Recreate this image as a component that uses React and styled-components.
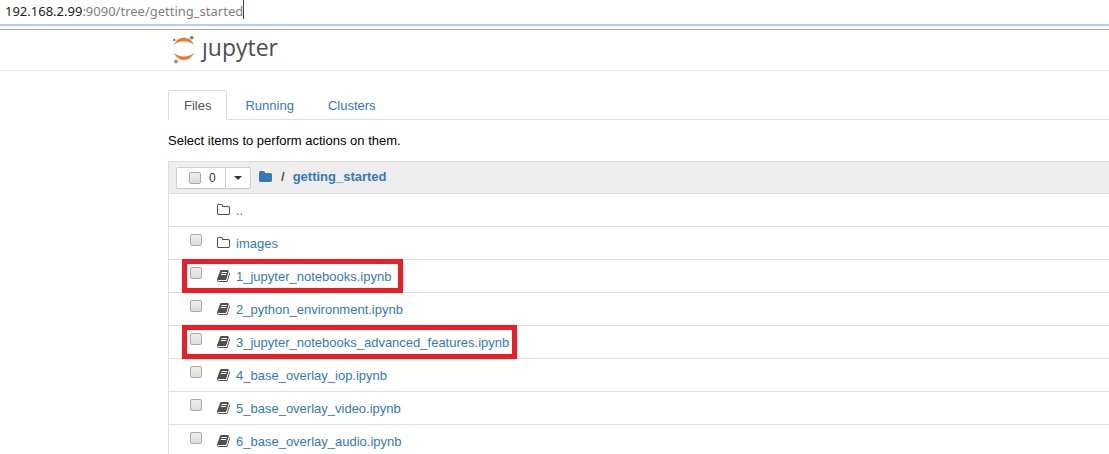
import React from "react";
import styled, { createGlobalStyle, css } from "styled-components";

const GlobalStyle = createGlobalStyle`
  *, *::before, *::after { box-sizing: border-box; }
  body {
    margin: 0;
    background: #fff;
    color: #000;
    font: 13px/20px "Liberation Sans", Arial, sans-serif;
    overflow: hidden;
  }
`;

const AddressBar = styled.label`
  display: flex;
  height: 26px;
  padding-left: 5px;
  border-bottom: 2px solid #b2cdfb;
  font: 13px/22px "Noto Sans", "Open Sans", sans-serif;
  color: #222;
`;

const AddressInput = styled.input`
  field-sizing: content;
  height: 22px;
  padding: 0;
  border: 0;
  outline: 0;
  background: none;
  font: inherit;
  color: #808080;
`;

const Caret = styled.span`
  width: 1px;
  height: 19px;
  background: #444;
`;

const Header = styled.header`
  display: flex;
  align-items: flex-start;
  height: 42px;
  margin-top: 3px;
  padding-left: 172px;
  border-top: 1px solid #ababab;
  border-bottom: 1px solid #e7e7e7;
`;

const Logo = styled.a`
  display: flex;
  gap: 6px;
  padding-top: 5px;
  color: #4e4e4e;
  text-decoration: none;
`;

const Wordmark = styled.span`
  font: 23px/24px "Open Sans", "Noto Sans", sans-serif;
`;

const Main = styled.main`
  padding: 19px 0 0 168px;
`;

const Tabs = styled.nav`
  display: flex;
  gap: 2px;
  height: 30px;
  border-bottom: 1px solid #ddd;
`;

const Tab = styled.a`
  height: 30px;
  padding: 5px 15px;
  border: 1px solid transparent;
  border-radius: 2px 2px 0 0;
  color: #337ab7;
  text-decoration: none;
  ${(p) => p.$active && css`
    color: #555;
    background: #fff;
    border-color: #ddd #ddd #fff;
  `}
`;

const Hint = styled.p`
  margin: 11px 0 10px;
`;

const Listing = styled.section`
  border: 1px solid #ddd;
  border-width: 1px 0 0 1px;
`;

const ListHeader = styled.div`
  display: flex;
  align-items: center;
  height: 32px;
  padding-left: 7px;
  background: #eee;
  border-bottom: 1px solid #ddd;
`;

const ButtonGroup = styled.div`
  display: flex;
  height: 22px;
  margin-right: 8px;
  background: #fff;
  border: 1px solid #ccc;
  border-radius: 2px;
`;

const SelectAll = styled.label`
  display: flex;
  align-items: center;
  gap: 8px;
  width: 48px;
  padding-left: 12px;
  font-size: 12px;
  color: #333;
`;

const MenuButton = styled.button`
  display: flex;
  align-items: center;
  justify-content: center;
  width: 25px;
  padding: 0;
  border: 0;
  border-left: 1px solid #ccc;
  background: none;
  color: #333;
`;

const Checkbox = styled.input.attrs({ type: "checkbox" })`
  appearance: none;
  flex: none;
  width: 12px;
  height: 12px;
  margin: 0;
  border: 1px solid #aaa;
  border-radius: 2px;
  background: linear-gradient(#eee, #dcdcdc);
`;

const Breadcrumb = styled.nav`
  display: flex;
  align-items: center;
  gap: 8px;
  padding-bottom: 1px;
  color: #555;
  font-weight: bold;
`;

const Link = styled.a`
  display: flex;
  color: #337ab7;
  text-decoration: none;
`;

const Rows = styled.ul`
  margin: 0;
  padding: 0;
  list-style: none;
`;

const Row = styled.li`
  height: 33px;
  border-bottom: 1px solid #ddd;
`;

const Entry = styled.div`
  position: relative;
  display: inline-flex;
  height: 32px;
  padding: 7px 0 5px 21px;
`;

const CheckSlot = styled.span`
  display: flex;
  width: 27px;
`;

const FileIcon = styled.span`
  display: flex;
  width: 19px;
  padding-top: 2px;
  color: #4f4f4f;
`;

const Highlight = styled.span`
  position: absolute;
  inset: -1px ${(p) => -p.$reach}px;
  left: 13px;
  border: 5px solid #ee1c25;
  pointer-events: none;
`;

const FOLDER = "M1728 608v704q0 92-66 158t-158 66h-1216q-92 0-158-66t-66-158v-960q0-92 66-158t158-66h320q92 0 158 66t66 158v32h672q92 0 158 66t66 158z";
const PATHS = {
  folder: FOLDER,
  folderOpen: "M1600 1312v-704q0-40-28-68t-68-28h-704q-40 0-68-28t-28-68v-64q0-40-28-68t-68-28h-320q-40 0-68 28t-28 68v960q0 40 28 68t68 28h1216q40 0 68-28t28-68zm128-704v704q0 92-66 158t-158 66h-1216q-92 0-158-66t-66-158v-960q0-92 66-158t158-66h320q92 0 158 66t66 158v32h672q92 0 158 66t66 158z",
  book: "M1639 478q40 57 18 129l-275 906q-19 64-76.5 107.5t-122.5 43.5h-923q-77 0-148.5-53.5t-99.5-131.5q-24-67-2-127 0-4 3-27t4-37q1-8-3-21.5t-3-19.5q2-11 8-21t16.5-23.5 16.5-23.5q23-38 45-91.5t30-91.5q3-10 .5-30t-.5-28q3-11 17-28t17-23q21-36 42-92t25-90q1-9-2.5-32t.5-28q4-13 22-30.5t22-22.5q19-26 42.5-84.5t27.5-96.5q1-8-3-25.5t-2-26.5q2-8 9-18t18-23 17-21q8-12 16.5-30.5t15-35 16-36 19.5-32 26.5-23.5 36-11.5 47.5 5.5l-1 3q38-9 51-9h761q74 0 114 56t18 130l-274 906q-36 119-71.5 153.5t-128.5 34.5h-869q-27 0-38 15-11 16-1 43 24 70 144 70h923q29 0 56-15.5t35-41.5l300-987q7-22 5-57 38 15 59 43zm-1064 2q-4 13 2 22.5t20 9.5h608q13 0 25.5-9.5t16.5-22.5l21-64q4-13-2-22.5t-20-9.5h-608q-13 0-25.5 9.5t-16.5 22.5zm-83 256q-4 13 2 22.5t20 9.5h608q13 0 25.5-9.5t16.5-22.5l21-64q4-13-2-22.5t-20-9.5h-608q-13 0-25.5 9.5t-16.5 22.5z",
};

const Icon = ({ name }) => (
  <svg width="14" height="14" viewBox={name === "book" ? "0 0 1792 1792" : "64 0 1792 1792"} fill="currentColor" aria-hidden="true">
    <path d={PATHS[name]} />
  </svg>
);

const LogoMark = () => (
  <svg width="24" height="30" viewBox="0 0 24 30" aria-hidden="true">
    <path d="M2 10C4 5.300 7.500 2.800 12 2.800s8 2.500 10 7.200C19.500 7.500 16 6.300 12 6.300S4.500 7.500 2 10Z" fill="#f37726" />
    <path d="M2 17.800C4 22.500 7.500 25 12 25s8-2.500 10-7.200C19.500 20.300 16 21.500 12 21.500S4.500 20.300 2 17.800Z" fill="#f37726" />
    <circle cx="19.700" cy="2.700" r="1.800" fill="#767677" />
    <circle cx="2.300" cy="4.900" r="1.200" fill="#767677" />
    <circle cx="4" cy="26.500" r="2.100" fill="#9a9a9a" />
  </svg>
);

const files = [
  { name: "..", icon: "folderOpen", parent: true },
  { name: "images", icon: "folderOpen" },
  { name: "1_jupyter_notebooks.ipynb", icon: "book", reach: 12 },
  { name: "2_python_environment.ipynb", icon: "book" },
  { name: "3_jupyter_notebooks_advanced_features.ipynb", icon: "book", reach: 8 },
  { name: "4_base_overlay_iop.ipynb", icon: "book" },
  { name: "5_base_overlay_video.ipynb", icon: "book" },
  { name: "6_base_overlay_audio.ipynb", icon: "book" },
];

export default function App() {
  return (
    <>
      <GlobalStyle />
      <AddressBar>
        <span>192.168.2.99</span>
        <AddressInput aria-label="Address" defaultValue=":9090/tree/getting_started" spellCheck={false} />
        <Caret />
      </AddressBar>
      <Header>
        <Logo href="#">
          <LogoMark />
          <Wordmark>ȷupyter</Wordmark>
        </Logo>
      </Header>
      <Main>
        <Tabs>
          <Tab href="#files" $active>Files</Tab>
          <Tab href="#running">Running</Tab>
          <Tab href="#clusters">Clusters</Tab>
        </Tabs>
        <Hint>Select items to perform actions on them.</Hint>
        <Listing>
          <ListHeader>
            <ButtonGroup>
              <SelectAll><Checkbox />0</SelectAll>
              <MenuButton aria-label="Select by type">
                <svg width="8" height="4" viewBox="0 0 8 4" aria-hidden="true">
                  <path d="M0 0h8L4 4Z" fill="currentColor" />
                </svg>
              </MenuButton>
            </ButtonGroup>
            <Breadcrumb>
              <Link href="#" aria-label="Home"><Icon name="folder" /></Link>
              <span>/</span>
              <Link href="#getting_started">getting_started</Link>
            </Breadcrumb>
          </ListHeader>
          <Rows>
            {files.map((f) => (
              <Row key={f.name}>
                <Entry>
                  <CheckSlot>{!f.parent && <Checkbox aria-label={f.name} />}</CheckSlot>
                  <FileIcon><Icon name={f.icon} /></FileIcon>
                  <Link href={"#" + f.name}>{f.name}</Link>
                  {f.reach && <Highlight $reach={f.reach} />}
                </Entry>
              </Row>
            ))}
          </Rows>
        </Listing>
      </Main>
    </>
  );
}
